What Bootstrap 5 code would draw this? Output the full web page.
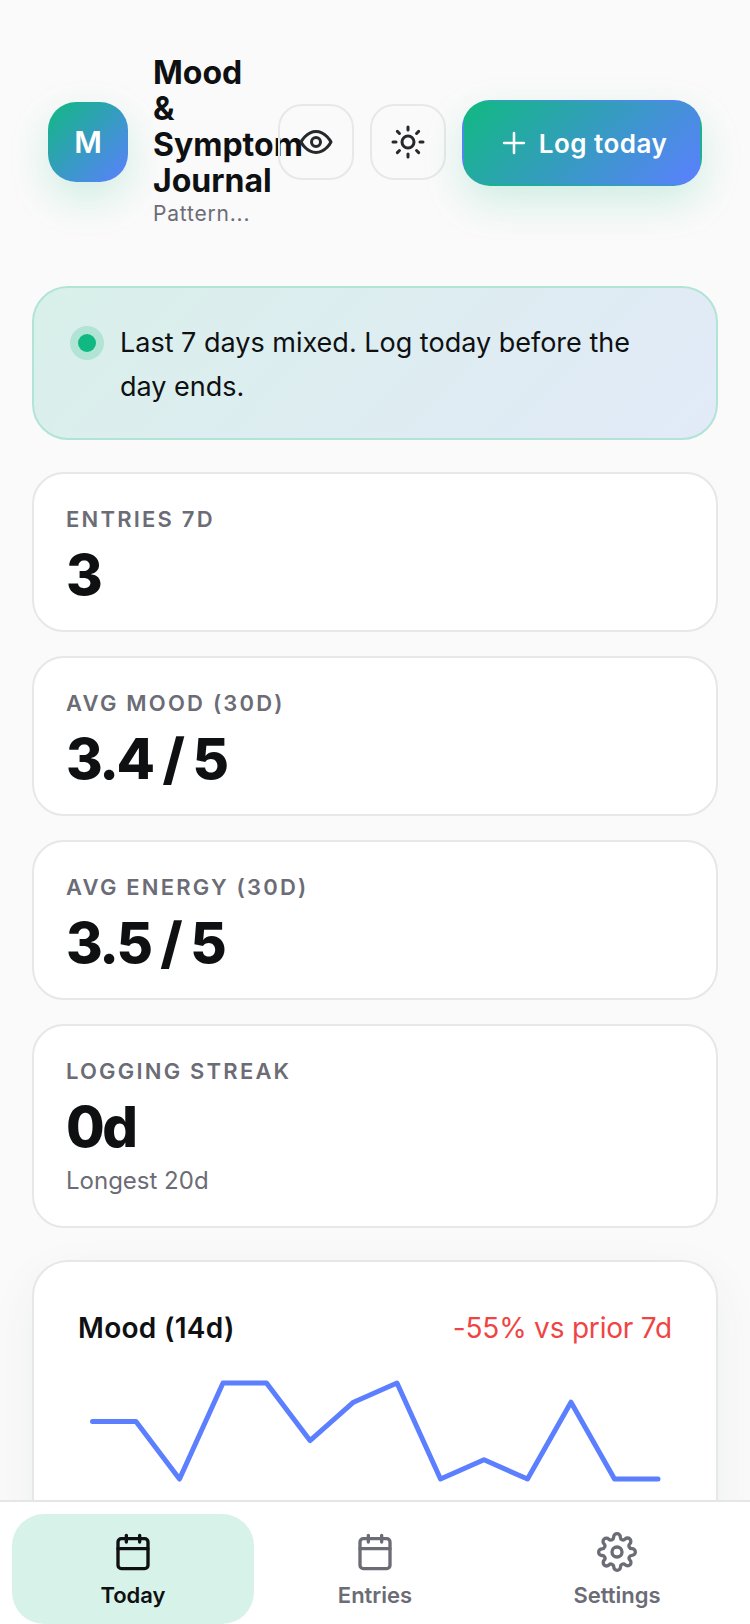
<!DOCTYPE html>
<html lang="en">
<head>
    <meta charset="UTF-8">
    <meta name="viewport" content="width=device-width, initial-scale=1.0">
    <title>Mood &amp; Symptom Journal</title>
    <link href="https://cdn.jsdelivr.net/npm/bootstrap@5.3.2/dist/css/bootstrap.min.css" rel="stylesheet">
    <style>
        body {
            background: #fafafa;
            color: #0f1012;
            font-family: Inter, "Liberation Sans", sans-serif;
        }
        .app-shell { height: 1624px; }
        .app-main { padding: 0 32px; }

        /* header */
        .app-head { padding: 55px 16px 0; height: 286px; }
        .app-left { flex: 1 1 0; min-width: 0; gap: 25px; }
        .app-brand { flex: 1 1 0; min-width: 0; }
        .app-logo {
            width: 80px; height: 80px; border-radius: 28px;
            background: linear-gradient(135deg, #10b981, #5b7fff);
            color: #fff; font-size: 30px; font-weight: 600;
            box-shadow: 0 16px 40px rgba(16, 185, 129, .18);
        }
        .app-title { font-size: 32px; font-weight: 700; line-height: 36px; }
        .app-sub { font-size: 21px; line-height: 30px; color: #6b6c75; letter-spacing: .8px; white-space: nowrap; }
        .icon-tile {
            width: 76px; height: 76px; border-radius: 24px;
            border: 2px solid #e8e8e8; background: transparent; color: #27282b;
        }
        .log-btn {
            width: 240px; height: 86px; border-radius: 28px; margin-top: 2px;
            border: 2px solid transparent;
            background: linear-gradient(135deg, #10b981, #5b7fff);
            color: #fff; font-size: 26px; font-weight: 600; letter-spacing: .5px;
            box-shadow: 0 16px 40px rgba(16, 185, 129, .18);
        }

        /* banner */
        .mix-banner {
            height: 154px; border-radius: 36px; padding: 33px 48px 0 36px;
            border: 2px solid #b1e4d5;
            background: linear-gradient(135deg, #d9f0ea, #e2eaf8);
            font-size: 27px; line-height: 44px;
        }
        .mix-dot {
            width: 34px; height: 34px; border-radius: 50%;
            background: #b1e4d5; margin-top: 5px;
        }
        .mix-dot span { width: 18px; height: 18px; border-radius: 50%; background: #10b981; }

        /* stat cards */
        .stat-box {
            background: #fff; border: 2px solid #e6e7e8; border-radius: 32px;
            padding: 31px 32px 27px; margin-bottom: 24px;
        }
        .stat-first { margin-top: 32px; }
        .stat-label {
            font-size: 22px; line-height: 28px; font-weight: 600;
            letter-spacing: 2.2px; color: #6b6c75;
        }
        .stat-value {
            font-size: 56px; line-height: 56px; font-weight: 800;
            letter-spacing: -2.4px; margin-top: 14px;
        }
        .stat-note { font-size: 24px; line-height: 32px; color: #6b6c75; margin: 10px 0 2px; }

        /* chart */
        .chart-box {
            background: #fff; border: 2px solid #e6e7e8; border-radius: 36px;
            margin-top: 32px; padding: 46px 44px 0;
            box-shadow: 0 16px 48px rgba(16, 60, 50, .06);
        }
        .chart-title { font-size: 28px; line-height: 40px; font-weight: 600; letter-spacing: .3px; }
        .chart-delta { font-size: 28px; line-height: 40px; color: #ef4444; letter-spacing: -.2px; }
        .chart-svg { display: block; margin: 0 -44px; }

        /* bottom nav */
        .tab-bar {
            height: 124px; flex: none; background: #fff;
            border-top: 2px solid #e6e6e6; padding: 12px 12px 0; z-index: 2;
        }
        .tab-item {
            flex: 1 1 0; border-radius: 32px; color: #6b6c75;
            font-size: 22px; font-weight: 600; line-height: 30px; padding-top: 18px;
        }
        .tab-item.is-on { background: #d7f3e9; color: #0f1012; }
    </style>
</head>
<body>

<div class="app-shell d-flex flex-column overflow-hidden">
    <div class="app-main flex-grow-1 overflow-hidden">
        <header class="app-head d-flex align-items-start">
            <div class="d-flex align-items-center w-100 gap-3">
                <div class="d-flex align-items-center app-left">
                    <div class="app-logo d-flex align-items-center justify-content-center flex-shrink-0">M</div>
                    <div class="app-brand">
                        <div class="app-title">Mood &amp; Symptom Journal</div>
                        <div class="app-sub">Pattern...</div>
                    </div>
                </div>
                <button class="icon-tile d-flex align-items-center justify-content-center flex-shrink-0 p-0" type="button">
                    <svg width="36" height="36" viewBox="0 0 24 24" fill="none" stroke="currentColor" stroke-width="2" stroke-linecap="round" stroke-linejoin="round"><path d="M2 12s3.6-7 10-7 10 7 10 7-3.6 7-10 7-10-7-10-7Z"/><circle cx="12" cy="12" r="3"/></svg>
                </button>
                <button class="icon-tile d-flex align-items-center justify-content-center flex-shrink-0 p-0" type="button">
                    <svg width="36" height="36" viewBox="0 0 24 24" fill="none" stroke="currentColor" stroke-width="2" stroke-linecap="round" stroke-linejoin="round"><circle cx="12" cy="12" r="4"/><path d="M12 2v2M12 20v2M4.9 4.9l1.4 1.4M17.7 17.7l1.4 1.4M2 12h2M20 12h2M4.9 19.1l1.4-1.4M17.7 6.3l1.4-1.4"/></svg>
                </button>
                <button class="log-btn d-flex align-items-center justify-content-center flex-shrink-0 p-0" type="button">
                    <svg class="me-2" width="34" height="34" viewBox="0 0 24 24" fill="none" stroke="currentColor" stroke-width="1.8" stroke-linecap="round"><path d="M12 5v14M5 12h14"/></svg>
                    Log today
                </button>
            </div>
        </header>

        <div class="mix-banner">
            <div class="d-flex gap-3 align-items-start">
                <div class="mix-dot d-flex align-items-center justify-content-center flex-shrink-0"><span></span></div>
                <div>Last 7 days mixed. Log today before the day ends.</div>
            </div>
        </div>

        <div class="stat-box stat-first">
            <div class="stat-label">ENTRIES 7D</div>
            <div class="stat-value">3</div>
        </div>
        <div class="stat-box">
            <div class="stat-label">AVG MOOD (30D)</div>
            <div class="stat-value">3.4 / 5</div>
        </div>
        <div class="stat-box">
            <div class="stat-label">AVG ENERGY (30D)</div>
            <div class="stat-value">3.5 / 5</div>
        </div>
        <div class="stat-box mb-0">
            <div class="stat-label">LOGGING STREAK</div>
            <div class="stat-value">0d</div>
            <div class="stat-note">Longest 20d</div>
        </div>

        <section class="chart-box">
            <div class="d-flex justify-content-between align-items-center">
                <div class="chart-title">Mood (14d)</div>
                <div class="chart-delta">-55% vs prior 7d</div>
            </div>
            <svg class="chart-svg" width="681" height="200" viewBox="0 0 681 200" fill="none">
                <polyline id="moodLine" stroke="#5b7fff" stroke-width="5" stroke-linecap="round" stroke-linejoin="round" fill="none"></polyline>
            </svg>
        </section>
    </div>

    <nav class="tab-bar d-flex">
        <div class="tab-item is-on d-flex flex-column align-items-center">
            <svg width="40" height="40" viewBox="0 0 24 24" fill="none" stroke="currentColor" stroke-width="2" stroke-linecap="round" stroke-linejoin="round"><rect x="3" y="4" width="18" height="18" rx="2"/><path d="M8 2v4M16 2v4M3 10h18"/></svg>
            <span class="mt-2">Today</span>
        </div>
        <div class="tab-item d-flex flex-column align-items-center">
            <svg width="40" height="40" viewBox="0 0 24 24" fill="none" stroke="currentColor" stroke-width="2" stroke-linecap="round" stroke-linejoin="round"><rect x="3" y="4" width="18" height="18" rx="2"/><path d="M8 2v4M16 2v4M3 10h18"/></svg>
            <span class="mt-2">Entries</span>
        </div>
        <div class="tab-item d-flex flex-column align-items-center">
            <svg width="40" height="40" viewBox="0 0 24 24" fill="none" stroke="currentColor" stroke-width="2" stroke-linecap="round" stroke-linejoin="round"><circle cx="12" cy="12" r="3"/><path d="M19.4 15a1.65 1.65 0 0 0 .33 1.82l.06.06a2 2 0 0 1 0 2.83 2 2 0 0 1-2.83 0l-.06-.06a1.65 1.65 0 0 0-1.82-.33 1.65 1.65 0 0 0-1 1.51V21a2 2 0 0 1-2 2 2 2 0 0 1-2-2v-.09A1.65 1.65 0 0 0 9 19.4a1.65 1.65 0 0 0-1.82.33l-.06.06a2 2 0 0 1-2.83 0 2 2 0 0 1 0-2.83l.06-.06a1.65 1.65 0 0 0 .33-1.82 1.65 1.65 0 0 0-1.51-1H3a2 2 0 0 1-2-2 2 2 0 0 1 2-2h.09A1.65 1.65 0 0 0 4.6 9a1.65 1.65 0 0 0-.33-1.82l-.06-.06a2 2 0 0 1 0-2.83 2 2 0 0 1 2.83 0l.06.06a1.65 1.65 0 0 0 1.82.33H9a1.65 1.65 0 0 0 1-1.51V3a2 2 0 0 1 2-2 2 2 0 0 1 2 2v.09a1.65 1.65 0 0 0 1 1.51 1.65 1.65 0 0 0 1.82-.33l.06-.06a2 2 0 0 1 2.83 0 2 2 0 0 1 0 2.83l-.06.06a1.65 1.65 0 0 0-.33 1.82V9a1.65 1.65 0 0 0 1.51 1H21a2 2 0 0 1 2 2 2 2 0 0 1-2 2h-.09a1.65 1.65 0 0 0-1.51 1z"/></svg>
            <span class="mt-2">Settings</span>
        </div>
    </nav>
</div>

<script src="https://cdn.jsdelivr.net/npm/bootstrap@5.3.2/dist/js/bootstrap.bundle.min.js"></script>
<script>
// Mood values for the last 14 days, 1 to 5
const moods = [3, 3, 2.1, 3.6, 3.6, 2.7, 3.3, 3.6, 2.1, 2.4, 2.1, 3.3, 2.1, 2.1];
const pts = moods.map((m, i) => {
    const x = 58.5 + i * 43.5;
    const y = 35 + (3.6 - m) * 64;
    return x.toFixed(1) + ',' + y.toFixed(1);
});
document.getElementById('moodLine').setAttribute('points', pts.join(' '));
</script>

</body>
</html>
